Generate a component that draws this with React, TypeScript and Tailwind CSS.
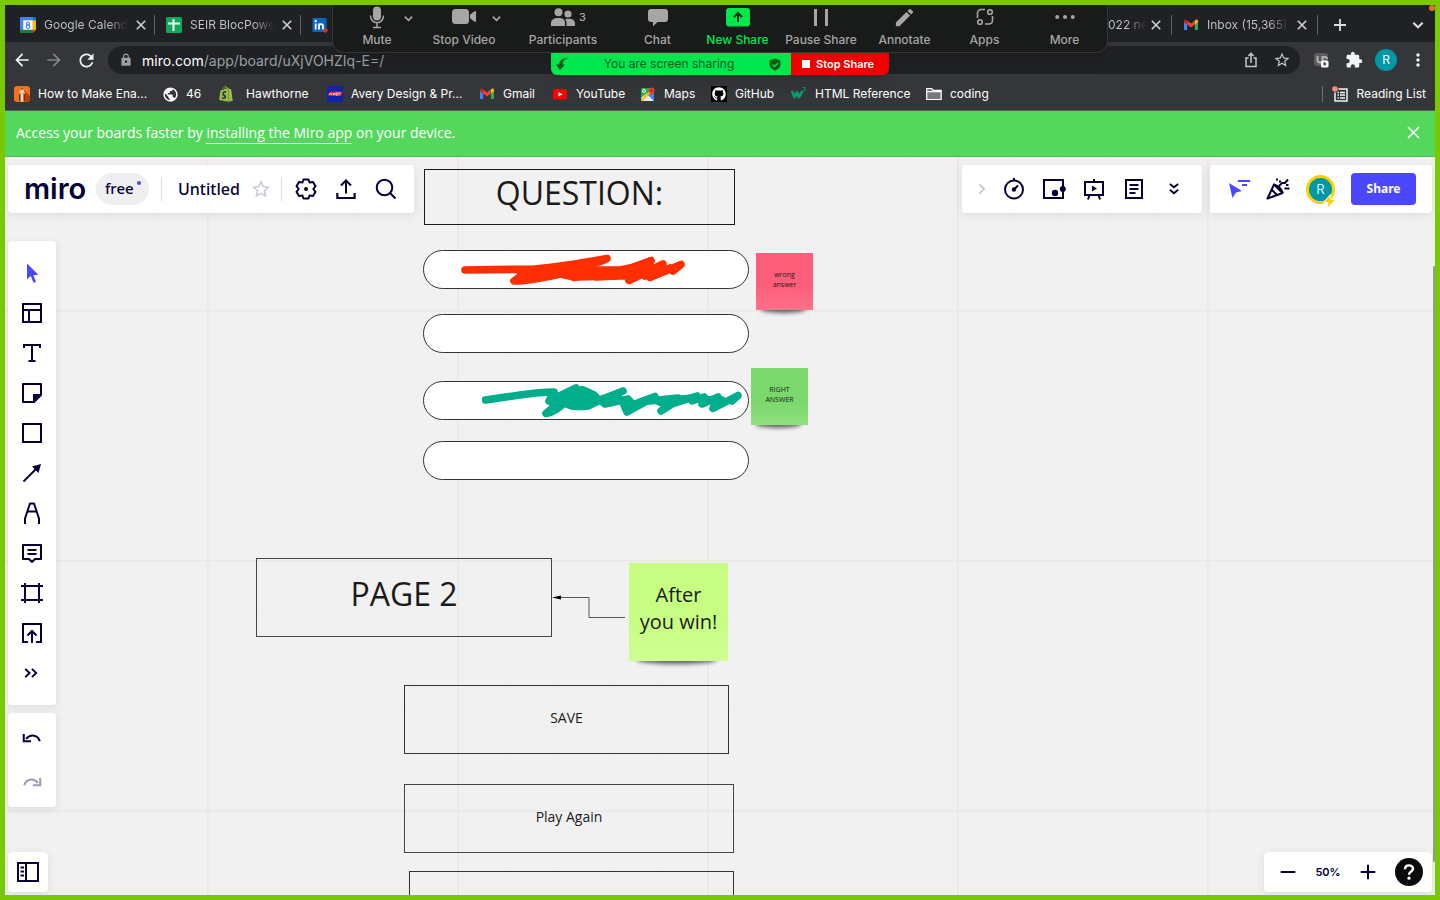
import type { ReactNode } from "react";
import {
  MdArrowBack,
  MdArrowForward,
  MdRefresh,
  MdLock,
  MdStarBorder,
  MdExtension,
  MdMoreVert,
  MdPublic,
  MdPeople,
  MdEdit,
} from "react-icons/md";
import { FaGithub, FaShopify } from "react-icons/fa";

/* ---------- shared icon wrapper ---------- */

function Line({ children, size = 24, width = 2, className = "" }: { children: ReactNode; size?: number; width?: number; className?: string }) {
  return (
    <svg width={size} height={size} viewBox="0 0 24 24" fill="none" stroke="currentColor" strokeWidth={width} className={className} aria-hidden="true">
      {children}
    </svg>
  );
}

function CloseIcon({ size = 12 }: { size?: number }) {
  return (
    <svg width={size} height={size} viewBox="0 0 12 12" stroke="currentColor" strokeWidth="1.6" aria-hidden="true">
      <path d="M1.8 1.8l8.4 8.4M10.2 1.8l-8.4 8.4" />
    </svg>
  );
}

function ChevronIcon({ size = 12 }: { size?: number }) {
  return (
    <svg width={size} height={size} viewBox="0 0 12 12" fill="none" stroke="currentColor" strokeWidth="1.8" aria-hidden="true">
      <path d="M2 4l4 4 4-4" />
    </svg>
  );
}

function GmailIcon() {
  return (
    <svg width="16" height="16" viewBox="0 0 16 16" aria-hidden="true">
      <path d="M1 4v8.2c0 .5.4.9.9.9h2.3V6.8z" fill="#4285f4" />
      <path d="M15 4v8.2c0 .5-.4.9-.9.9h-2.3V6.8z" fill="#34a853" />
      <path d="M11.8 3.8v3.8L15 5.200V4c0-1.500-1.400-2-2.300-1.300z" fill="#fbbc04" />
      <path d="M4.200 3.800v3.800L1 5.200V4c0-1.500 1.400-2 2.300-1.300z" fill="#c5221f" />
      <path d="M4.200 3.600L8 6.500l3.800-2.900v4L8 10.500 4.200 7.600z" fill="#ea4335" />
    </svg>
  );
}

/* ---------- browser tabs ---------- */

function Tab({ icon, title }: { icon: ReactNode; title: string }) {
  return (
    <div className="flex h-5 w-[146px] shrink-0 items-center gap-2 border-r border-[#5f6165] pr-[9px] pl-[11px]">
      {icon}
      <span className="w-[84px] bg-linear-to-r from-[#c3c5c9] from-75% to-transparent bg-clip-text text-[12px] whitespace-nowrap text-transparent">{title}</span>
      <button type="button" aria-label="Close tab" className="-ml-px text-[#d0d2d6]">
        <CloseIcon />
      </button>
    </div>
  );
}

const calendarIcon = (
  <svg className="shrink-0" width="16" height="16" viewBox="0 0 16 16" aria-hidden="true">
    <path d="M0 1a1 1 0 011-1h12v3H0z" fill="#4285f4" />
    <path d="M0 3h3.500v10H0z" fill="#4285f4" />
    <path d="M13 0h2a1 1 0 011 1v2.500h-3z" fill="#1967d2" />
    <path d="M12.700 3.300H16V13h-3.300z" fill="#fbbc04" />
    <path d="M0 12.800h12.800V16H1a1 1 0 01-1-1z" fill="#188038" />
    <path d="M12.800 12.800H16L12.800 16z" fill="#ea4335" />
    <path d="M3.200 3.200h9.600v9.600H3.200z" fill="#fff" />
    <circle cx="8" cy="6.500" r="1.500" fill="none" stroke="#4285f4" strokeWidth="1.200" />
    <circle cx="8" cy="9.700" r="1.800" fill="none" stroke="#4285f4" strokeWidth="1.200" />
  </svg>
);

const sheetIcon = (
  <svg className="shrink-0" width="16" height="16" viewBox="0 0 16 16" aria-hidden="true">
    <rect width="16" height="16" rx="1.500" fill="#0fa958" />
    <path d="M2 6.500h12M7.500 2v12" stroke="#fff" strokeWidth="2" />
  </svg>
);

const linkedinIcon = (
  <svg className="shrink-0" width="16" height="16" viewBox="0 0 16 16" aria-hidden="true">
    <rect x="0.500" y="1" width="14" height="14" rx="1" fill="#0a66c2" />
    <path d="M3.700 6.500v6M7 12.500v-6M7 9c0-2.300 4-2.800 4 0v3.500" stroke="#fff" strokeWidth="1.800" fill="none" />
    <circle cx="3.700" cy="4" r="1.200" fill="#fff" />
    <circle cx="13.500" cy="13.500" r="2.200" fill="#d93025" />
  </svg>
);

function TabStrip() {
  return (
    <div className="flex h-[37px] items-center bg-[#202124] pt-0.5 pl-1">
      <Tab icon={calendarIcon} title="Google Calend" />
      <Tab icon={sheetIcon} title="SEIR BlocPowe" />
      <div className="pl-[11px]">{linkedinIcon}</div>
      <div className="flex-1" />
      <div className="flex h-5 items-center gap-1 border-r border-[#5f6165] pr-[9px]">
        <span className="w-[38px] bg-linear-to-r from-[#c3c5c9] from-50% to-transparent bg-clip-text text-[12px] whitespace-nowrap text-transparent">022 ne</span>
        <button type="button" aria-label="Close tab" className="text-[#d0d2d6]">
          <CloseIcon />
        </button>
      </div>
      <Tab icon={<span className="shrink-0"><GmailIcon /></span>} title="Inbox (15,365)" />
      <button type="button" aria-label="New tab" className="ml-[15px] text-[#dadce0]">
        <svg width="14" height="14" viewBox="0 0 14 14" stroke="currentColor" strokeWidth="1.800"><path d="M7 1v12M1 7h12" /></svg>
      </button>
      <button type="button" aria-label="Search tabs" className="mr-2.5 ml-[64px] text-[#dadce0]">
        <ChevronIcon size={14} />
      </button>
    </div>
  );
}

/* ---------- address bar ---------- */

function AddressBar() {
  return (
    <div className="flex h-9 items-center bg-[#35363a] pr-[7px] text-[#f1f3f4]">
      <div className="flex w-[103px] items-center gap-3 pl-[7px]">
        <button type="button" aria-label="Back"><MdArrowBack size={20} /></button>
        <button type="button" aria-label="Forward" className="text-[#85878a]"><MdArrowForward size={20} /></button>
        <button type="button" aria-label="Reload"><MdRefresh size={21} /></button>
      </div>
      <div className="flex h-7 flex-1 items-center rounded-full bg-[#202124] pr-[9px] pl-[11px]">
        <MdLock size={14} className="mr-[9px] text-[#9aa0a6]" />
        <div className="flex-1 text-[14px] text-[#9aa0a6]"><span className="text-white">miro.com</span>/app/board/uXjVOHZIq-E=/</div>
        <button type="button" aria-label="Share page" className="mr-[15px] text-[#c4c7cb]">
          <svg width="14" height="16" viewBox="0 0 14 16" fill="none" stroke="currentColor" strokeWidth="1.500"><path d="M4.500 6H2v8.500h10V6H9.500M7 11V1.500M4.300 4L7 1.300 9.700 4" /></svg>
        </button>
        <button type="button" aria-label="Bookmark page" className="text-[#c4c7cb]"><MdStarBorder size={18} /></button>
      </div>
      <div className="flex items-center">
        <button type="button" aria-label="Extension" className="ml-[14px]">
          <svg width="15" height="15" viewBox="0 0 15 15"><rect width="14" height="13" rx="3" fill="#5d5d5d" /><path d="M3.500 3v4a2.500 2.500 0 005 0V3M8.500 6a2.200 2.200 0 014.400 0" stroke="#b8b8b8" strokeWidth="1.800" fill="none" /><rect x="7" y="7.500" width="7.500" height="7" rx="1.500" fill="#fff" /><path d="M9.500 9.300v3.200h1.500l1.500-1.600-1.500-1.600z" fill="#444" /></svg>
        </button>
        <button type="button" aria-label="Extensions" className="ml-4"><MdExtension size={18} /></button>
        <button type="button" aria-label="Profile" className="ml-3 size-[22px] rounded-full bg-[#0097a7] text-[12px] text-white">R</button>
        <button type="button" aria-label="Browser menu" className="ml-[11px]"><MdMoreVert size={20} /></button>
      </div>
    </div>
  );
}

/* ---------- bookmarks ---------- */

function Bookmark({ icon, label, width }: { icon: ReactNode; label: string; width: string }) {
  return (
    <a href="#" className={`flex shrink-0 items-center gap-2 whitespace-nowrap ${width}`}>
      {icon}
      <span>{label}</span>
    </a>
  );
}

function BookmarksBar() {
  return (
    <nav className="flex h-[33px] items-center border-b border-[#5b5c5f] bg-[#35363a] pr-[9px] pl-[9px] text-[12px] text-white">
      <Bookmark width="w-[148px]" label="How to Make Ena..." icon={
        <svg width="16" height="16" viewBox="0 0 16 16"><rect width="16" height="16" rx="3" fill="#f4721e" /><path d="M10 4l6 6v3a3 3 0 01-3 3h-2z" fill="#b9400c" /><path d="M5 15.500V7l3-5.500L11 7v8.500z" fill="#f3cfae" /><path d="M5 15.500V8l1.500-1v8.500zM9.500 7L11 8v7.500H9.500z" fill="#6b3020" /><path d="M7 3.400L8 1.500l1 1.900z" fill="#222" /></svg>
      } />
      <Bookmark width="w-[56px]" label="46" icon={<MdPublic size={17} className="-mr-px" />} />
      <Bookmark width="w-[109px]" label="Hawthorne" icon={<FaShopify size={16} className="mr-1 text-[#95bf47]" />} />
      <Bookmark width="w-[152px]" label="Avery Design & Pr..." icon={
        <svg width="16" height="16" viewBox="0 0 16 16"><rect width="16" height="16" fill="#1023ac" /><path d="M1 9l2-3.500h11l1.500 1L14 10H3z" fill="#d9253c" /><path d="M2 9l1.500-2L5 9M6 7l1 2 1-2M11 7H9v2h2M12 9V7h1.500" stroke="#fff" strokeWidth=".8" fill="none" /></svg>
      } />
      <Bookmark width="w-[73px]" label="Gmail" icon={<GmailIcon />} />
      <Bookmark width="w-[88px]" label="YouTube" icon={
        <svg width="16" height="16" viewBox="0 0 16 16"><rect x="1" y="3" width="14" height="10.500" rx="2.500" fill="#f00" /><path d="M6.500 6v4.500l4-2.250z" fill="#fff" /></svg>
      } />
      <Bookmark width="w-[71px]" label="Maps" icon={
        <svg width="16" height="16" viewBox="0 0 16 16"><rect x="1" y="2" width="13" height="13" rx="1.500" fill="#34a853" /><path d="M1 12l6-5 7 8H2.500z" fill="#e8eaed" /><path d="M7.500 8.500L14 15V8l-3-3z" fill="#4285f4" /><path d="M1.500 14.500L11 5" stroke="#fbbc04" strokeWidth="2" /><path d="M11.500 10.500c0-2-2.800-3.300-2.800-6a2.900 2.900 0 015.800 0c0 2.700-3 4-3 6z" fill="#ea4335" /><circle cx="11.500" cy="4.500" r="1" fill="#7b1f16" /><circle cx="4" cy="5" r="1.500" fill="none" stroke="#fff" /></svg>
      } />
      <Bookmark width="w-[80px]" label="GitHub" icon={<span className="bg-black p-px"><FaGithub size={14} /></span>} />
      <Bookmark width="w-[135px]" label="HTML Reference" icon={
        <svg width="16" height="16" viewBox="0 0 16 16" fill="none" stroke="#0a9d68"><path d="M.800 5l2.800 6L6 6.500l2 4.500 3.500-6" strokeWidth="2.800" strokeLinejoin="round" /><path d="M12 1.500h2.500L13.300 3.200c2 0 1.500 2.300-.9 1.600" strokeWidth=".9" /></svg>
      } />
      <Bookmark width="w-[70px]" label="coding" icon={
        <svg width="16" height="14" viewBox="0 0 16 14" stroke="#fff" strokeWidth="1.200"><path d="M.700 12.500V1.500h5l1.500 1.800h8v9.200z" fill="#77787b" /><path d="M.700 4.700h14.600" /></svg>
      } />
      <div className="flex-1" />
      <a href="#" className="flex h-4 items-center gap-2 border-l border-[#6f7175] pl-[9px] whitespace-nowrap">
        <svg width="17" height="17" viewBox="0 0 17 17" fill="none" stroke="#f1f3f4" strokeWidth="1.500"><path d="M6.500 3H15v12H3V6.500M5.500 6.500h1.500M8 6.500h5M5.500 9h1.500M8 9h5M5.500 12h1.500M8 12h5" /><circle cx="3" cy="3" r="2.800" fill="#f28b82" stroke="none" /></svg>
        Reading List
      </a>
    </nav>
  );
}

/* ---------- meeting controls ---------- */

function MeetingItem({ icon, label, width, tone = "text-[#a6a6a6]" }: { icon: ReactNode; label: string; width: string; tone?: string }) {
  return (
    <button type="button" className={`relative flex shrink-0 flex-col items-center ${width} ${tone}`}>
      <span className="flex h-6 items-center">{icon}</span>
      <span className="text-[12px] leading-[22px] font-medium whitespace-nowrap">{label}</span>
    </button>
  );
}

function MeetingBar() {
  return (
    <div className="absolute inset-x-0 top-0 z-20 flex flex-col items-center">
      <div className="flex h-[48px] rounded-b-xl border-x border-b border-[#333436] bg-[#191a1a] pr-px shadow-lg">
        <MeetingItem width="w-[88px]" label="Mute" icon={<>
          <svg width="16" height="24" viewBox="0 0 16 24" fill="none" stroke="currentColor" strokeWidth="1.500"><rect x="4" y="1.500" width="8" height="14" rx="4" fill="currentColor" stroke="none" /><path d="M1.500 10.500c0 9.500 13 9.500 13 0M8 18v4M4 22.500h8" /></svg>
          <span className="absolute top-2 right-[7px]"><ChevronIcon size={11} /></span>
        </>} />
        <MeetingItem width="w-[86px]" label="Stop Video" icon={<>
          <svg width="24" height="16" viewBox="0 0 24 16" fill="currentColor"><rect width="17" height="15" rx="3.500" /><path d="M18 6c1.500-1.500 4-4 6-4v11c-2 0-4.500-2.500-6-4z" /></svg>
          <span className="absolute top-2 right-[5px]"><ChevronIcon size={11} /></span>
        </>} />
        <MeetingItem width="w-[112px]" label="Participants" icon={<>
          <svg width="24" height="18" viewBox="0 0 24 18" fill="currentColor"><circle cx="7.500" cy="4.200" r="4" /><path d="M0 18v-3c0-3 2.500-5 7.500-5s6.500 2 6.500 5v3z" /><circle cx="17" cy="6" r="3.600" /><path d="M15.500 18v-3c0-2-.5-3-1.500-4 5-1 10 0 10 4v1.500c0 1-.5 1.500-1.500 1.500z" /></svg>
          <span className="absolute top-1 right-[33px] text-[11px] leading-4 font-medium">3</span>
        </>} />
        <MeetingItem width="w-[77px]" label="Chat" icon={
          <svg width="20" height="19" viewBox="0 0 20 19" fill="currentColor"><path d="M3 1h14a3 3 0 013 3v7a3 3 0 01-3 3H9.500L5 18.500V14H3a3 3 0 01-3-3V4a3 3 0 013-3z" /></svg>
        } />
        <MeetingItem width="w-[83px]" label="New Share" tone="text-[#00e64d]" icon={
          <svg width="24" height="19" viewBox="0 0 24 19"><rect width="24" height="18.500" rx="3" fill="currentColor" /><path d="M12 14V5.500M8 9l4-4 4 4" stroke="#08310f" strokeWidth="2" fill="none" /></svg>
        } />
        <MeetingItem width="w-[84px]" label="Pause Share" icon={
          <svg width="16" height="17" viewBox="0 0 16 17" fill="currentColor"><path d="M1 0h3v17H1zM12 0h3v17h-3z" /></svg>
        } />
        <MeetingItem width="w-[83px]" label="Annotate" icon={<MdEdit size={23} />} />
        <MeetingItem width="w-[77px]" label="Apps" icon={
          <svg width="18" height="18" viewBox="0 0 18 18" fill="none" stroke="currentColor" strokeWidth="1.600"><path d="M9 1.500H5a3.500 3.500 0 00-3.500 3.500v5M16.500 8v4.500a3.500 3.500 0 01-3.500 3.500H9" /><circle cx="14" cy="4" r="2.300" /><circle cx="4" cy="14" r="2.300" /></svg>
        } />
        <MeetingItem width="w-[83px]" label="More" icon={
          <svg width="20" height="6" viewBox="0 0 20 6" fill="currentColor"><circle cx="2.200" cy="3" r="2" /><circle cx="10" cy="3" r="2" /><circle cx="17.800" cy="3" r="2" /></svg>
        } />
      </div>
      <div className="flex h-[22px] overflow-hidden rounded-b-md text-[12px] shadow-lg">
        <div className="flex w-[240px] items-center justify-between bg-[#00e64d] px-1 text-[#0b5a2a]">
          <svg width="14" height="14" viewBox="0 0 14 14" fill="#075c12"><path d="M13 1C8 1 4.500 3 4 7.500H1L5 13l5-5.500H7.500C7.500 4.500 9.500 2.500 13 1z" /></svg>
          <span>You are screen sharing</span>
          <svg className="mr-1.5" width="12" height="13" viewBox="0 0 12 13"><path d="M6 .5l5.500 2v4c0 3-2.500 5-5.500 6-3-1-5.500-3-5.500-6v-4z" fill="#075c12" /><path d="M3.500 6.500l2 2 3.500-3.500" stroke="#00e64d" strokeWidth="1.300" fill="none" /></svg>
        </div>
        <button type="button" className="flex w-[98px] items-center gap-1.5 bg-[#ee0000] pl-[11px] text-[11px] font-semibold whitespace-nowrap text-white">
          <span className="size-2 shrink-0 bg-white" />
          Stop Share
        </button>
      </div>
    </div>
  );
}

/* ---------- install banner ---------- */

function InstallBanner() {
  return (
    <div className="flex h-[46px] items-center justify-between border-b border-[#4bbb55] bg-[#55d75e] pr-[15px] pb-0.5 pl-[11px] font-['Open_Sans','Noto_Sans',sans-serif] text-[14px] text-white">
      <p>
        Access your boards faster by <a href="#" className="border-b border-white pb-px">installing the Miro app</a> on your device.
      </p>
      <button type="button" aria-label="Dismiss">
        <svg width="13" height="13" viewBox="0 0 13 13" stroke="currentColor" strokeWidth="1.600"><path d="M1 1l11 11M12 1L1 12" /></svg>
      </button>
    </div>
  );
}

/* ---------- board content ---------- */

function Box({ className, children }: { className: string; children?: ReactNode }) {
  return <div className={`absolute flex items-center justify-center border text-[#1a1a1a] ${className}`}>{children}</div>;
}

function Sticky({ className, color, children }: { className: string; color: string; children: ReactNode }) {
  return (
    <div className={`absolute ${className}`}>
      <div className="absolute right-[12%] -bottom-[3px] left-[8%] h-2 rounded-b-[50%] bg-black/60 blur-[2px]" />
      <div className={`relative flex size-full items-center justify-center bg-linear-to-b text-center text-[#1a1a1a] ${color}`}>{children}</div>
    </div>
  );
}

function Board() {
  return (
    <div className="absolute inset-0 font-['Open_Sans','Noto_Sans',sans-serif]">
      <Box className="top-[12px] left-[419px] h-[56px] w-[311px] border-[#1a1a1a] pb-2 text-[32px]">QUESTION:</Box>
      <Box className="top-[93px] left-[418px] h-[39px] w-[326px] rounded-full border-[#333] bg-white" />
      <Box className="top-[157px] left-[418px] h-[39px] w-[326px] rounded-full border-[#333] bg-white" />
      <Box className="top-[224px] left-[418px] h-[39px] w-[326px] rounded-full border-[#333] bg-white" />
      <Box className="top-[284px] left-[418px] h-[39px] w-[326px] rounded-full border-[#333] bg-white" />
      <Box className="top-[401px] left-[251px] h-[79px] w-[296px] border-[#444] pb-2 text-[32px]">PAGE 2</Box>
      <Box className="top-[528px] left-[399px] h-[69px] w-[325px] border-[#333] pb-1 text-[14px]">SAVE</Box>
      <Box className="top-[627px] left-[399px] h-[69px] w-[330px] border-[#444] pb-1 text-[14px]">Play Again</Box>
      <Box className="top-[714px] left-[404px] h-[69px] w-[325px] border-[#333]" />

      <svg className="absolute top-[93px] left-[455px]" width="228" height="40" viewBox="460 250 228 40" fill="none" stroke="#ff2e00" strokeWidth="7.600" strokeLinecap="round" strokeLinejoin="round" aria-hidden="true">
        <path d="M465 270L535 269Q560 267 607 258.500Q598 264 560 270L522 275L514 281Q530 281 560 274Q574 270 590 270L574 277.500L602 271L596 277L616 276L651 260.500L620 272L641 268L629 280.500L663 264L650 277.500L681 264.500L673 271" />
        <path d="M520 270L548 269 588 264 582 270 620 270 640 266 634 276 616 276 574 277 556 273 522 277z" fill="#ff2e00" />
        <path d="M640 268L650 264M645 276L658 268M655 273L670 268" />
      </svg>

      <svg className="absolute top-[226px] left-[477px]" width="265" height="38" viewBox="482 383 265 38" fill="none" stroke="#00ae8d" strokeWidth="7.600" strokeLinecap="round" strokeLinejoin="round" aria-hidden="true">
        <path d="M485.500 400L520 395Q540 392 554 392L549 401L576 388L560 402L546 413.500Q556 412 565 402L582 389.500L594 395L573 395L565 403Q573 408 588 406Q600 400 623 391L600 400L605 404L628 399L624 405L627 412L655 396.500L640 402L678 398L661 411L672 404L697 396L692 401L704 397L702 404L718 397L713 408.500L738 395.500L732 401" />
        <path d="M574 391L562 402 572 406 588 404 594 398 586 400 573 399z" fill="#00ae8d" />
        <path d="M552 399L566 395M553 405L562 400M596 397L586 404M598 400L618 396 614 400 630 401 632 405 648 400 656 400 662 403 672 400 692 398 712 400 722 400" />
      </svg>

      <svg className="absolute top-[434px] left-[547px]" width="74" height="28" viewBox="0 0 74 28" fill="none" stroke="#555" aria-hidden="true">
        <path d="M4 6.500h33v20h36" />
        <path d="M0 6.500l9-2v4z" fill="#000" stroke="none" />
      </svg>

      <Sticky className="top-[96px] left-[751px] h-[57px] w-[57px] text-[7px] leading-[10px]" color="from-[#ff5e7b] from-60% to-[#ff7289]"><span className="pb-1">wrong<br />answer</span></Sticky>
      <Sticky className="top-[211px] left-[746px] h-[57px] w-[57px] text-[7px] leading-[10px]" color="from-[#7bd86c] from-60% to-[#90df80]"><span className="pb-1">RIGHT<br />ANSWER</span></Sticky>
      <Sticky className="top-[406px] left-[624px] h-[98px] w-[99px] text-[20px] leading-[27px]" color="from-[#c6fd82] from-50% to-[#cffe92]"><span className="pb-2">After<br />you win!</span></Sticky>
    </div>
  );
}

/* ---------- board tools ---------- */

const panel = "pointer-events-auto rounded-[4px] bg-white shadow-[0_2px_8px_rgba(5,0,56,0.09)]";

function Tool({ label, size = "size-10", children }: { label: string; size?: string; children: ReactNode }) {
  return (
    <button type="button" aria-label={label} className={`flex shrink-0 items-center justify-center ${size}`}>
      {children}
    </button>
  );
}

function BoardHeader() {
  return (
    <div className="flex items-start">
      <header className={`flex h-12 w-[406px] items-center ${panel}`}>
        <a href="#" className="w-[88px] pl-4 text-[29px] leading-8 font-semibold">miro</a>
        <span className="relative flex h-8 w-[53px] items-center rounded-full bg-[#efeff2] pb-0.5 pl-[9px] font-['Noto_Sans',sans-serif] text-[15px] font-medium">
          free
          <span className="absolute top-2 right-2 size-1 rounded-full bg-[#4a47ff]" />
        </span>
        <span className="ml-3 h-6 w-px bg-[#dcdce2]" />
        <h1 className="w-[83px] pl-4 font-['Noto_Sans',sans-serif] text-[16px] font-medium">Untitled</h1>
        <button type="button" aria-label="Star board" className="ml-[7px] text-[#c9c8d4]">
          <Line size={18} width={2}><path d="M12 2.500l2.900 6.300 6.900.8-5.100 4.700 1.400 6.800-6.100-3.400-6.100 3.400 1.400-6.800-5.100-4.700 6.900-.8z" /></Line>
        </button>
        <span className="mr-1 ml-[11px] h-6 w-px bg-[#dcdce2]" />
        <Tool label="Settings"><Line><path d="M9.500 2.500h5l1 3 3.500-.600 2.500 4.300L19.300 12l2.200 2.800-2.500 4.300-3.500-.600-1 3h-5l-1-3-3.500.600-2.500-4.300L4.700 12 2.500 9.200 5 4.900l3.500.600z" strokeLinejoin="round" /><circle cx="12" cy="12" r="2" fill="currentColor" stroke="none" /></Line></Tool>
        <Tool label="Export"><Line><path d="M4 16v5h16v-5" transform="translate(-1 0) scale(1.080 1)" /><path d="M12 16.500V4M7 8.500l5-5 5 5" /></Line></Tool>
        <Tool label="Search"><Line><circle cx="10.500" cy="10.500" r="7.800" /><path d="M16 16l5.500 5.500" /></Line></Tool>
      </header>

      <div className="flex-1" />

      <div className={`mr-2 flex h-12 items-center px-2 ${panel}`}>
        <Tool label="Collapse" size="h-10 w-6"><Line size={16} className="text-[#c9c8d4]" width={3}><path d="M8 5l7 7-7 7" /></Line></Tool>
        <Tool label="Timer"><Line><circle cx="12" cy="12.500" r="9" /><path d="M12 1v3M12 12.500l4-4" /><circle cx="12" cy="12.500" r="2.200" fill="currentColor" stroke="none" /></Line></Tool>
        <Tool label="Voting"><Line><path d="M21 9V3H2v18h19v-5" /><path d="M21 9v8" /><circle cx="13" cy="16" r="3.200" fill="currentColor" stroke="none" /><circle cx="20.800" cy="12" r="3" fill="currentColor" stroke="none" /></Line></Tool>
        <Tool label="Presentation"><Line><path d="M3 5h18v13H3zM12 2v3M7.500 18l-1.500 4.500M16.500 18l1.500 4.500" /><path d="M10 8.500v6l5-3z" fill="currentColor" stroke="none" /></Line></Tool>
        <Tool label="Notes"><Line><path d="M4 3h16v18H4zM7.500 8h9M7.500 12h9M7.500 16h6" /></Line></Tool>
        <Tool label="More apps"><Line size={20}><path d="M7 6l5 4 5-4M7 13l5 4 5-4" strokeWidth="2.400" /></Line></Tool>
      </div>

      <div className={`flex h-12 items-center pr-4 pl-2 ${panel}`}>
        <Tool label="Cursors"><svg width="24" height="24" viewBox="0 0 24 24" fill="#4a47ff"><path d="M3 6l13 8-6 1.500L6.500 21z" /><path d="M12 3h12v2H12zM16 7h5v2h-5z" /></svg></Tool>
        <Tool label="Reactions"><Line><path d="M8 7.500L1.500 21.500l15-5.500zM6 13l5 5" strokeLinejoin="round" /><path d="M7.500 7.500c4 1 8 4.500 9.500 8.500M13 9l3-3h3l3-3.500M14 3.500v2M10 2.500h2M18.500 11.500h5M20 8h2.500" /></Line></Tool>
        <button type="button" aria-label="Account" className="relative ml-2 size-[29px] rounded-full border-[3px] border-[#ffd000] bg-[#0097a7] text-[13px] leading-none text-[#d8f3f5]">
          R
          <svg className="absolute -right-1 -bottom-2" width="13" height="15" viewBox="0 0 13 15"><path d="M7.500 1L1.500 8h4L4.500 13.500 11.500 6h-4z" fill="#ffd000" stroke="#fff" strokeWidth="1.500" paintOrder="stroke" /></svg>
        </button>
        <button type="button" className="ml-4 h-8 w-[65px] rounded-[4px] bg-[#4a47ff] font-['Noto_Sans',sans-serif] text-[12px] font-bold text-white">Share</button>
      </div>
    </div>
  );
}

function ToolRail() {
  return (
    <div className="mt-7 flex w-12 flex-col gap-2">
      <div className={`flex flex-col items-center py-3 ${panel}`}>
        <Tool label="Select"><svg width="24" height="24" viewBox="0 0 24 24" fill="#4a47ff"><path d="M7 2.500v15.800l3.800-3.200 2.700 6.600 2.500-1-2.700-6.400 5-.5z" /></svg></Tool>
        <Tool label="Templates"><Line><path d="M3 3h18v18H3zM3 9h18M9 9v12" /></Line></Tool>
        <Tool label="Text"><Line><path d="M4 7V4h16v3M12 4v16M8.500 20h7" /></Line></Tool>
        <Tool label="Sticky note"><Line><path d="M3 3h18v11l-7 7H3z" strokeLinejoin="round" /><path d="M13 21v-8h8z" fill="currentColor" stroke="none" /></Line></Tool>
        <Tool label="Shape"><Line><path d="M3 3h18v18H3z" /></Line></Tool>
        <Tool label="Connection line"><Line><path d="M3.500 20.500L17 7" /><path d="M21 3l-2.500 9-6.500-6.500z" fill="currentColor" stroke="none" /></Line></Tool>
        <Tool label="Pen"><Line><path d="M5 23v-5.500L10 2.500h4l5 15V23M8 10.500h8" strokeLinejoin="round" /></Line></Tool>
        <Tool label="Comment"><Line><path d="M3 4h18v14h-6l-3 3-3-3H3zM7.500 9h9M7.500 13h9" strokeLinejoin="round" /></Line></Tool>
        <Tool label="Frame"><Line><path d="M5 2v20M19 2v20M1 5h22M1 19h22" /></Line></Tool>
        <Tool label="Upload"><Line><path d="M8 21H3V3h18v18h-5M12 22V10.500M7.500 14.500L12 10l4.500 4.500" /></Line></Tool>
        <Tool label="More tools"><Line size={20}><path d="M4 7l5 5-5 5M12 7l5 5-5 5" strokeWidth="2.400" /></Line></Tool>
      </div>
      <div className={`flex flex-col items-center py-[3px] ${panel}`}>
        <Tool label="Undo" size="h-11 w-10"><Line size={22}><path d="M20.500 15.500c-2-6.500-9.500-8.500-15-2.500" strokeWidth="2.200" /><path d="M3 7.500v8h8" strokeWidth="2.200" /></Line></Tool>
        <Tool label="Redo" size="h-11 w-10"><Line size={22} className="text-[#9c99b4]"><path d="M3.500 15.500c2-6.500 9.500-8.500 15-2.500" strokeWidth="2.200" /><path d="M21 7.500v8h-8" strokeWidth="2.200" /></Line></Tool>
      </div>
    </div>
  );
}

function BoardFooter() {
  return (
    <div className="mt-auto flex h-10 items-center justify-between">
      <div className={panel}>
        <Tool label="Open frames"><Line><path d="M2 3h20v18H2zM10 3v18" /><path d="M4.500 7.500H8M4.500 11.500H8M4.500 15.500H8" /></Line></Tool>
      </div>
      <div className={`flex h-10 items-center pr-[9px] pl-1 ${panel}`}>
        <Tool label="Zoom out"><Line size={16} width={3}><path d="M1 12h22" /></Line></Tool>
        <button type="button" className="w-10 text-[11px] font-semibold">50%</button>
        <Tool label="Zoom in"><Line size={16} width={3}><path d="M1 12h22M12 1v22" /></Line></Tool>
        <button type="button" aria-label="Help" className="ml-[7px] flex size-7 items-center justify-center rounded-full bg-[#0b0b0b] text-white">
          <svg width="16" height="18" viewBox="0 0 16 18" fill="none" stroke="currentColor" strokeWidth="2.400"><path d="M4 6.200c0-5 8-5 8-.5 0 3-4 2.600-4 6" /><circle cx="8" cy="15.200" r="1.600" fill="currentColor" stroke="none" /></svg>
        </button>
      </div>
    </div>
  );
}

export default function App() {
  return (
    <div className="relative flex h-screen flex-col overflow-hidden border-[5px] border-[#7ac800] font-['Inter',sans-serif]">
      <TabStrip />
      <AddressBar />
      <BookmarksBar />
      <MeetingBar />
      <span className="absolute top-0 right-0 z-30 size-1.5 rounded-full bg-[#d97a00]" />
      <InstallBanner />
      <main className="relative flex-1 overflow-hidden bg-[#f1f1f1] bg-[linear-gradient(to_right,#e9e9e9_1px,#ededed_2px,transparent_2px),linear-gradient(to_bottom,#e9e9e9_1px,#ededed_2px,transparent_2px),linear-gradient(to_right,#eeeeee_1px,transparent_1px),linear-gradient(to_bottom,#eeeeee_1px,transparent_1px)] bg-[size:250px_250px,250px_250px,50px_50px,50px_50px] bg-[position:202px_0,0_153px,3px_0,0_3px] text-[#050038]">
        <Board />
        <div className="pointer-events-none absolute inset-0 flex flex-col px-[3px] pt-2 pb-[3px]">
          <BoardHeader />
          <ToolRail />
          <BoardFooter />
        </div>
        <div className="absolute top-[109px] right-0 h-[596px] w-0.5 rounded-full bg-[#999]" />
      </main>
    </div>
  );
}
